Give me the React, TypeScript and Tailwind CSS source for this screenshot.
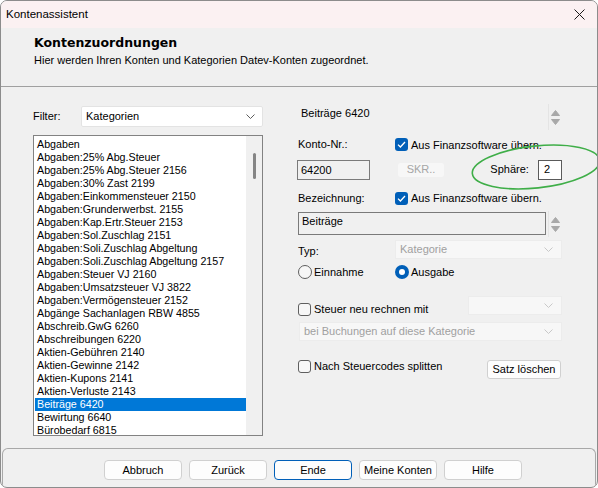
import React from 'react';

const items = [
  'Abgaben',
  'Abgaben:25% Abg.Steuer',
  'Abgaben:25% Abg.Steuer 2156',
  'Abgaben:30% Zast 2199',
  'Abgaben:Einkommensteuer 2150',
  'Abgaben:Grunderwerbst. 2155',
  'Abgaben:Kap.Ertr.Steuer 2153',
  'Abgaben:Sol.Zuschlag 2151',
  'Abgaben:Soli.Zuschlag Abgeltung',
  'Abgaben:Soli.Zuschlag Abgeltung 2157',
  'Abgaben:Steuer VJ 2160',
  'Abgaben:Umsatzsteuer VJ 3822',
  'Abgaben:Vermögensteuer 2152',
  'Abgänge Sachanlagen RBW 4855',
  'Abschreib.GwG 6260',
  'Abschreibungen 6220',
  'Aktien-Gebühren 2140',
  'Aktien-Gewinne 2142',
  'Aktien-Kupons 2141',
  'Aktien-Verluste 2143',
  'Beiträge 6420',
  'Bewirtung 6640',
  'Bürobedarf 6815',
];

function Chevron({ light }: { light?: boolean }) {
  return (
    <svg width="9" height="5" viewBox="0 0 9 5" className="shrink-0">
      <polyline points="0.5,0.5 4.5,4.5 8.5,0.5" fill="none" stroke={light ? '#c8c8c8' : '#5c5c5c'} strokeWidth="1" />
    </svg>
  );
}

function Spin() {
  return (
    <div className="w-[14px] h-[26px] border-l border-[#e4e4e4] flex flex-col items-center justify-center gap-[3px] shrink-0">
      <svg width="9" height="6" viewBox="0 0 9 6">
        <path d="M4.5 0.5 L8.5 5.5 L0.5 5.5 Z" fill="#a8a8a8" stroke="#a8a8a8" strokeLinejoin="round" />
      </svg>
      <svg width="9" height="6" viewBox="0 0 9 6">
        <path d="M0.5 0.5 L8.5 0.5 L4.5 5.5 Z" fill="#a8a8a8" stroke="#a8a8a8" strokeLinejoin="round" />
      </svg>
    </div>
  );
}

function Check({ checked, label }: { checked?: boolean; label: string }) {
  return (
    <div className="flex items-center">
      {checked ? (
        <div className="w-[13px] h-[13px] rounded-[3px] bg-[#005fb8] flex items-center justify-center">
          <svg width="9" height="7" viewBox="0 0 9 7">
            <polyline points="1,3.6 3.4,6 8,1" fill="none" stroke="#fff" strokeWidth="1.3" />
          </svg>
        </div>
      ) : (
        <div className="w-[13px] h-[13px] rounded-[3px] border border-[#5f5f5f] bg-[#f7f7f7]" />
      )}
      <span className="ml-[3px] text-[11px] leading-[14px]">{label}</span>
    </div>
  );
}

function Radio({ checked, label }: { checked?: boolean; label: string }) {
  return (
    <div className="flex items-center">
      {checked ? (
        <div className="w-[14px] h-[14px] rounded-full bg-[#005fb8] flex items-center justify-center">
          <div className="w-[6px] h-[6px] rounded-full bg-white" />
        </div>
      ) : (
        <div className="w-[14px] h-[14px] rounded-full border border-[#5f5f5f] bg-[#f7f7f7]" />
      )}
      <span className="ml-[2px] text-[11px] leading-[14px]">{label}</span>
    </div>
  );
}

function DisabledSelect({ width, text }: { width: string; text?: string }) {
  return (
    <div className={`${width} h-[19px] bg-[#f7f7f7] border border-[#ececec] flex items-center justify-between pl-[4px] pr-[8px] text-[11px] text-[#a0a0a0]`}>
      <span>{text}</span>
      <Chevron light />
    </div>
  );
}

function FooterButton({ label, primary }: { label: string; primary?: boolean }) {
  return (
    <button
      className={`w-[78px] h-[20px] rounded-[4px] bg-[#fdfdfd] text-[11px] leading-none text-black border ${
        primary ? 'border-[#005fb8]' : 'border-[#d0d0d0]'
      }`}
    >
      {label}
    </button>
  );
}

export default function App() {
  return (
    <div className="w-[598px] h-[488px] bg-[#f0f0f0] border border-[#8c8c8c] rounded-[7px] overflow-hidden flex flex-col font-['Liberation_Sans',Arial,sans-serif] text-black">
      {/* Titelleiste */}
      <div className="h-[27px] shrink-0 bg-[#fbf1f2] flex items-center justify-between pl-[5px] pr-[12px]">
        <span className="text-[11.5px]">Kontenassistent</span>
        <svg width="11" height="11" viewBox="0 0 11 11">
          <path d="M0.5 0.5 L10.5 10.5 M10.5 0.5 L0.5 10.5" stroke="#1a1a1a" strokeWidth="1" />
        </svg>
      </div>

      {/* Kopf */}
      <div className="h-[58px] shrink-0 pl-[33px] pt-[7px]">
        <div className="font-['DejaVu_Sans',sans-serif] font-bold text-[12.5px] leading-[16px]">Kontenzuordnungen</div>
        <div className="text-[11px] leading-[16px] mt-[1px]">Hier werden Ihren Konten und Kategorien Datev-Konten zugeordnet.</div>
      </div>
      <div className="h-0 border-t border-[#a0a0a0] shrink-0" />

      {/* Inhalt */}
      <div className="h-[361px] shrink-0 flex">
        {/* Links: Filter + Liste */}
        <div className="ml-[32px] w-[230px] flex flex-col">
          <div className="mt-[19px] h-[21px] flex items-center">
            <span className="w-[48px] text-[11px]">Filter:</span>
            <div className="w-[182px] h-[21px] bg-white border border-[#e3e3e3] rounded-[2px] flex items-center justify-between pl-[4px] pr-[7px] text-[11px]">
              <span>Kategorien</span>
              <Chevron />
            </div>
          </div>
          <div className="mt-[8px] h-[301px] border border-[#828282] bg-white flex overflow-hidden">
            <div className="flex-1 pt-[2px] pl-[1px]">
              {items.map((it) => (
                <div
                  key={it}
                  className={`h-[13px] leading-[13px] text-[10.7px] pl-[2px] whitespace-nowrap ${
                    it === 'Beiträge 6420' ? 'bg-[#0078d7] text-white' : ''
                  }`}
                >
                  {it}
                </div>
              ))}
            </div>
            <div className="w-[16px] bg-[#f0f0f0] relative shrink-0">
              <div className="absolute left-[7px] top-[17px] w-[3px] h-[26px] rounded-full bg-[#858585]" />
            </div>
          </div>
        </div>

        {/* Rechts: Details */}
        <div className="ml-[34px] w-[265px] flex flex-col text-[11px]">
          <div className="mt-[17px] h-[28px] flex items-start justify-between">
            <span className="pl-[4px] pt-[2px] leading-[14px]">Beiträge 6420</span>
            <Spin />
          </div>

          <div className="mt-[5px] h-[15px] flex items-center">
            <span className="w-[98px] pl-[1px]">Konto-Nr.:</span>
            <Check checked label="Aus Finanzsoftware übern." />
          </div>

          <div className="mt-[7px] h-[21px] flex items-center relative">
            <div className="w-[73px] h-[20px] border border-[#7a7a7a] bg-[#f0f0f0] pl-[3px] leading-[18px]">64200</div>
            <div className="ml-[27px] w-[49px] h-[16px] bg-[#f7f7f7] border border-[#f0f0f0] rounded-[3px] text-[#a6a6a6] flex items-center justify-center">SKR..</div>
            <span className="ml-[45px] w-[48px]">Sphäre:</span>
            <div className="w-[24px] h-[20px] border border-[#5a5a5a] bg-white pl-[5px] leading-[16px]">2</div>
            <svg width="134" height="52" viewBox="0 0 134 52" className="absolute left-[172px] top-[-18px] pointer-events-none">
              <ellipse cx="67" cy="26" rx="64" ry="21" fill="none" stroke="#3fae48" strokeWidth="1.6" transform="rotate(-6 67 26)" />
            </svg>
          </div>

          <div className="mt-[10px] h-[16px] flex items-center">
            <span className="w-[98px] pl-[1px]">Bezeichnung:</span>
            <Check checked label="Aus Finanzsoftware übern." />
          </div>

          <div className="mt-[6px] h-[23px] flex items-start justify-between">
            <div className="ml-[1px] w-[248px] h-[23px] border border-[#7a7a7a] bg-[#f0f0f0] pl-[3px] pt-[1px] leading-[14px]">Beiträge</div>
            <div className="-mt-[1px]">
              <Spin />
            </div>
          </div>

          <div className="mt-[5px] h-[19px] flex items-center">
            <span className="w-[98px] pl-[1px] pt-[3px]">Typ:</span>
            <DisabledSelect width="w-[167px]" text="Kategorie" />
          </div>

          <div className="mt-[5px] h-[16px] flex items-center pl-[1px]">
            <div className="w-[97px]">
              <Radio label="Einnahme" />
            </div>
            <Radio checked label="Ausgabe" />
          </div>

          <div className="mt-[16px] h-[19px] flex items-start justify-between">
            <div className="pl-[1px] mt-[6px]">
              <Check label="Steuer neu rechnen mit" />
            </div>
            <DisabledSelect width="w-[94px]" />
          </div>

          <div className="mt-[7px] h-[19px] flex pl-[2px]">
            <DisabledSelect width="w-[263px]" text="bei Buchungen auf diese Kategorie" />
          </div>

          <div className="mt-[18px] h-[20px] flex items-start justify-between">
            <div className="pl-[1px]">
              <Check label="Nach Steuercodes splitten" />
            </div>
            <button className="mt-[1px] mr-[1px] w-[74px] h-[19px] rounded-[3px] bg-[#fdfdfd] border border-[#d0d0d0] text-[11px] leading-none">
              Satz löschen
            </button>
          </div>
        </div>
      </div>

      {/* Fußzeile */}
      <div className="flex-1 border-t border-x border-[#a8a8a8] rounded-t-[6px] mx-[1px] flex gap-[7px] pl-[101px] pt-[11px]">
        <FooterButton label="Abbruch" />
        <FooterButton label="Zurück" />
        <FooterButton label="Ende" primary />
        <FooterButton label="Meine Konten" />
        <FooterButton label="Hilfe" />
      </div>
    </div>
  );
}
